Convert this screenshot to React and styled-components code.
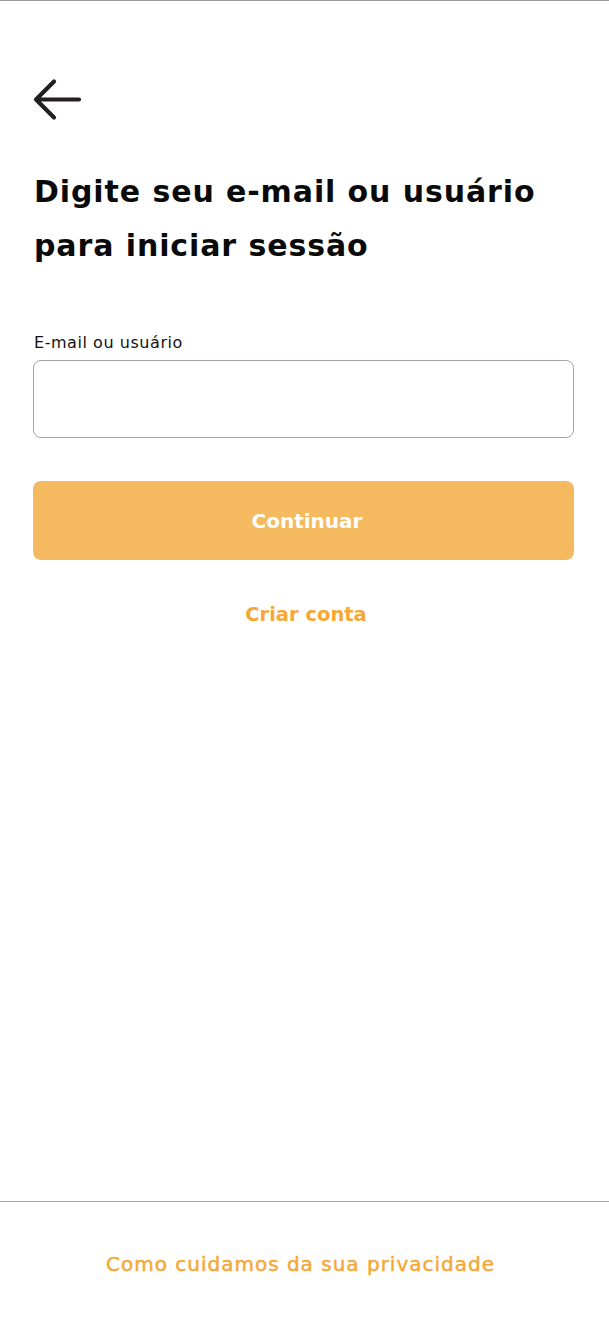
import React, { useState } from "react";
import styled, { createGlobalStyle } from "styled-components";

const GlobalStyle = createGlobalStyle`
  html, body {
    margin: 0;
    padding: 0;
    background: #ffffff;
  }
  * {
    box-sizing: border-box;
  }
`;

const Page = styled.div`
  min-height: 1330px;
  display: flex;
  flex-direction: column;
  border-top: 1px solid #9d9d9d;
  font-family: "DejaVu Sans", "Liberation Sans", sans-serif;
  color: #0d0d0d;
`;

const Main = styled.main`
  flex: 1;
  display: flex;
  flex-direction: column;
  padding: 77px 35px 0 33px;
`;

const BackButton = styled.button`
  width: 50px;
  height: 44px;
  padding: 0;
  border: none;
  background: none;
  cursor: pointer;
  svg {
    display: block;
  }
`;

const Title = styled.h1`
  margin: 43px 0 0 1px;
  font-size: 30px;
  line-height: 54px;
  font-weight: 700;
  letter-spacing: 0.9px;
  color: #0a0a0a;
`;

const Form = styled.form`
  display: flex;
  flex-direction: column;
  margin-top: 60px;
`;

const Label = styled.label`
  margin-left: 1px;
  font-size: 16px;
  line-height: 20px;
  letter-spacing: 0.55px;
  color: #111;
`;

const Input = styled.input`
  margin-top: 7px;
  height: 78px;
  width: 100%;
  padding: 0 16px;
  border: 1px solid #a8a2a4;
  border-radius: 8px;
  font-family: inherit;
  font-size: 18px;
  &:focus {
    outline: none;
    border-color: #f5a833;
  }
`;

const Submit = styled.button`
  margin-top: 43px;
  height: 79px;
  width: 100%;
  padding: 0 0 0 7px;
  border: none;
  border-radius: 8px;
  background: #f5b960;
  color: #ffffff;
  font-family: inherit;
  font-size: 20px;
  font-weight: 700;
  cursor: pointer;
`;

const CreateLink = styled.button`
  align-self: center;
  margin-top: 43px;
  padding: 0 0 0 5px;
  border: none;
  background: none;
  font-family: inherit;
  font-size: 19.5px;
  line-height: 24px;
  font-weight: 700;
  color: #f5a836;
  cursor: pointer;
`;

const Footer = styled.footer`
  height: 129px;
  display: flex;
  align-items: center;
  justify-content: center;
  padding: 0 8px 4px 0;
  border-top: 1px solid #a9a3a4;
`;

const PrivacyLink = styled.button`
  padding: 0;
  border: none;
  background: none;
  font-family: inherit;
  font-size: 20px;
  line-height: 24px;
  font-weight: 400;
  letter-spacing: 1px;
  color: #f5a836;
  -webkit-text-stroke: 0.5px #f5a836;
  cursor: pointer;
`;

function BackArrow() {
  return (
    <svg width="50" height="44" viewBox="0 0 50 44" fill="none">
      <path
        d="M46 21.5H3M3 21.5L21 3.5M3 21.5L21 39.5"
        stroke="#231f20"
        strokeWidth="4.2"
        strokeLinecap="round"
        strokeLinejoin="round"
      />
    </svg>
  );
}

export default function App() {
  const [login, setLogin] = useState("");

  return (
    <>
      <GlobalStyle />
      <Page>
        <Main>
          <BackButton aria-label="Voltar">
            <BackArrow />
          </BackButton>
          <Title>
            Digite seu e-mail ou usuário
            <br />
            para iniciar sessão
          </Title>
          <Form onSubmit={(e) => e.preventDefault()}>
            <Label htmlFor="login">E-mail ou usuário</Label>
            <Input id="login" value={login} onChange={(e) => setLogin(e.target.value)} />
            <Submit type="submit">Continuar</Submit>
            <CreateLink type="button">Criar conta</CreateLink>
          </Form>
        </Main>
        <Footer>
          <PrivacyLink type="button">Como cuidamos da sua privacidade</PrivacyLink>
        </Footer>
      </Page>
    </>
  );
}
